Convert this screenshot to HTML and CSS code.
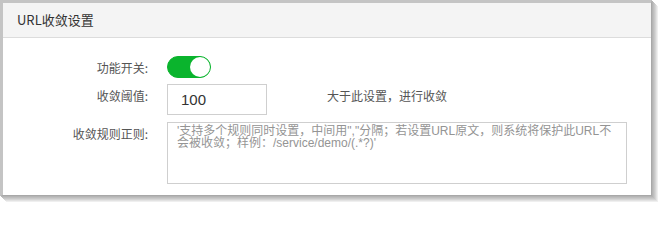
FILE: index.html
```html
<!DOCTYPE html>
<html lang="zh-CN">
<head>
<meta charset="utf-8">
<link rel="stylesheet" href="styles.css">
</head>
<body>
<div class="frame">
  <div class="panel">
    <div class="panel-header">URL收敛设置</div>
    <div class="form">
      <div class="row row-switch">
        <div class="label">功能开关:</div>
        <div class="switch"><span class="knob"></span></div>
      </div>
      <div class="row row-threshold">
        <div class="label">收敛阈值:</div>
        <div class="input">100</div>
        <div class="help">大于此设置，进行收敛</div>
      </div>
      <div class="row row-regex">
        <div class="label">收敛规则正则:</div>
        <div class="textarea">'支持多个规则同时设置，中间用","分隔；若设置URL原文，则系统将保护此URL不会被收敛；样例：/service/demo/(.*?)'</div>
      </div>
    </div>
  </div>
</div>
</body>
</html>
```
FILE: styles.css
```css
html, body {
  margin: 0;
  padding: 0;
  background: #ffffff;
}
body {
  width: 663px;
  height: 209px;
  overflow: hidden;
  font-family: "Noto Sans CJK SC", "Liberation Sans", sans-serif;
}
.frame {
  width: 648px;
  height: 192px;
  border-top: 3px solid #c4c4c4;
  border-left: 3px solid #c4c4c4;
  border-right: 1px solid #a8a8a8;
  border-bottom: 1px solid #a8a8a8;
  box-shadow: 1px 1px 0 #b4b4b4, 2px 2px 0 #bebebe, 3px 3px 0 #c8c8c8, 4px 4px 0 #d4d4d4, 5px 5px 0 #e2e2e2, 6px 6px 0 #efefef;
  background: #ffffff;
}
.panel {
  height: 100%;
  display: flex;
  flex-direction: column;
}
.panel-header {
  height: 34px;
  background: #f4f4f4;
  border-bottom: 1px solid #dcdcdc;
  padding-left: 14px;
  font-size: 13px;
  line-height: 34px;
  color: #333333;
}
.form {
  padding-top: 18px;
  display: flex;
  flex-direction: column;
}
.row {
  display: flex;
  align-items: flex-start;
}
.row-threshold {
  margin-top: 4px;
}
.row-regex {
  margin-top: 7px;
}
.label {
  width: 145px;
  text-align: right;
  font-size: 12px;
  line-height: 24px;
  color: #555555;
  margin-right: 19px;
  flex: none;
}
.switch {
  width: 44px;
  height: 22px;
  box-sizing: border-box;
  border-radius: 11px;
  background: #0ab42d;
  border: 1px solid #0ab42d;
  display: flex;
  justify-content: flex-end;
  align-items: center;
}
.knob {
  width: 20px;
  height: 20px;
  border-radius: 50%;
  background: #ffffff;
}
.input {
  width: 100px;
  height: 31px;
  box-sizing: border-box;
  border: 1px solid #cfcfcf;
  padding-left: 13px;
  font-family: "Liberation Sans", "Noto Sans CJK SC", sans-serif;
  font-size: 15px;
  line-height: 29px;
  color: #333333;
}
.help {
  margin-left: 60px;
  font-size: 12px;
  line-height: 24px;
  color: #555555;
}
.textarea {
  width: 460px;
  height: 62px;
  box-sizing: border-box;
  border: 1px solid #cfcfcf;
  padding: 2px 12px 0 9px;
  font-family: "Liberation Sans", "Noto Sans CJK SC", sans-serif;
  font-size: 12px;
  line-height: 12px;
  color: #949494;
  word-break: break-all;
}
```
